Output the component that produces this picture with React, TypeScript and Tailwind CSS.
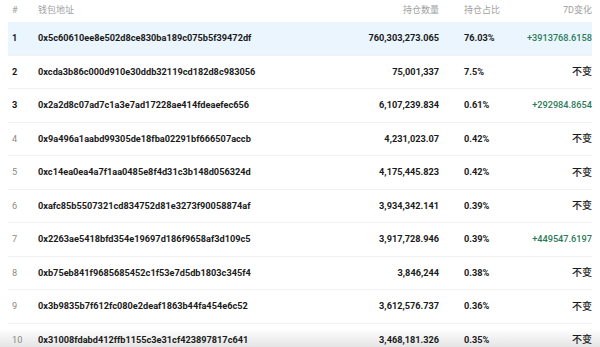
import React from "react";

type Holder = {
  rank: number;
  address: string;
  amount: string;
  share: string;
  change: string;
};

const holders: Holder[] = [
  { rank: 1, address: "0x5c60610ee8e502d8ce830ba189c075b5f39472df", amount: "760,303,273.065", share: "76.03%", change: "+3913768.6158" },
  { rank: 2, address: "0xcda3b86c000d910e30ddb32119cd182d8c983056", amount: "75,001,337", share: "7.5%", change: "不变" },
  { rank: 3, address: "0x2a2d8c07ad7c1a3e7ad17228ae414fdeaefec656", amount: "6,107,239.834", share: "0.61%", change: "+292984.8654" },
  { rank: 4, address: "0x9a496a1aabd99305de18fba02291bf666507accb", amount: "4,231,023.07", share: "0.42%", change: "不变" },
  { rank: 5, address: "0xc14ea0ea4a7f1aa0485e8f4d31c3b148d056324d", amount: "4,175,445.823", share: "0.42%", change: "不变" },
  { rank: 6, address: "0xafc85b5507321cd834752d81e3273f90058874af", amount: "3,934,342.141", share: "0.39%", change: "不变" },
  { rank: 7, address: "0x2263ae5418bfd354e19697d186f9658af3d109c5", amount: "3,917,728.946", share: "0.39%", change: "+449547.6197" },
  { rank: 8, address: "0xb75eb841f9685685452c1f53e7d5db1803c345f4", amount: "3,846,244", share: "0.38%", change: "不变" },
  { rank: 9, address: "0x3b9835b7f612fc080e2deaf1863b44fa454e6c52", amount: "3,612,576.737", share: "0.36%", change: "不变" },
  { rank: 10, address: "0x31008fdabd412ffb1155c3e31cf423897817c641", amount: "3,468,181.326", share: "0.35%", change: "不变" },
];

const cols = "grid grid-cols-[30px_300px_101px_81px_72px] items-center";

export default function App() {
  return (
    <div
      className="w-[600px] h-[347px] overflow-hidden bg-white px-2"
      style={{ fontFamily: "Roboto, 'Noto Sans CJK SC', sans-serif" }}
    >
      <div className={`${cols} h-[22px] text-[9px] text-[#a0a0a0]`}>
        <div className="pl-1">#</div>
        <div>钱包地址</div>
        <div className="text-right">持仓数量</div>
        <div className="pl-[25px]">持仓占比</div>
        <div className="text-right">7D变化</div>
      </div>
      {holders.map((h) => (
        <div
          key={h.rank}
          className={`${cols} h-[33.5px] border-b border-[#f1f1f1] text-[9.2px] font-bold text-[#1a1a1a] ${
            h.rank === 1 ? "bg-[#eaf5fd]" : ""
          } ${h.rank === 10 ? "-mx-2 px-2 bg-[linear-gradient(to_bottom,#ffffff_15%,#e3e3e3_75%)]" : ""}`}
        >
          <div className={`pl-1 ${h.rank <= 3 ? "" : "text-[#8a8a8a] font-normal"}`}>
            {h.rank}
          </div>
          <div>{h.address}</div>
          <div className="text-right">{h.amount}</div>
          <div className="pl-[25px]">{h.share}</div>
          <div
            className={`text-right ${
              h.change === "不变" ? "text-[10px] font-medium" : "text-[#2b7a57] font-medium"
            }`}
          >
            {h.change}
          </div>
        </div>
      ))}
    </div>
  );
}
